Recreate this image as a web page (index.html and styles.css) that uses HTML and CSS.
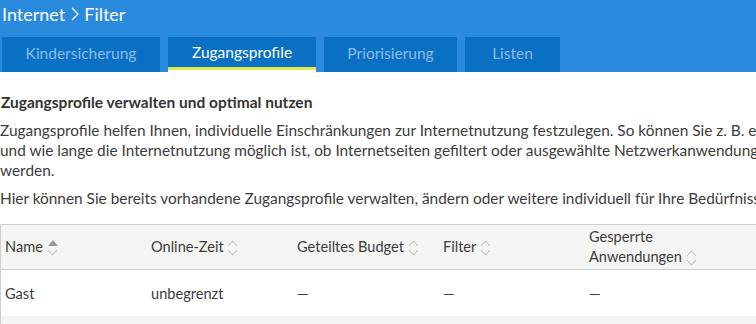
FILE: index.html
```html
<!DOCTYPE html>
<html lang="de">
<head>
  <title>Internet - Filter</title>
  <link rel="stylesheet" href="styles.css">
</head>
<body>

  <header class="topbar">
    <h1 class="crumbs">Internet
      <svg class="crumb-sep" width="8" height="14" viewBox="0 0 8 14"><path d="M1 1 L7 7 L1 13" fill="none" stroke="#fff" stroke-width="1.3"/></svg>
      Filter</h1>
    <nav class="tabs">
      <a class="tab tab-kinder">Kindersicherung</a>
      <a class="tab tab-profile active">Zugangsprofile</a>
      <a class="tab tab-prio">Priorisierung</a>
      <a class="tab tab-listen">Listen</a>
    </nav>
  </header>

  <main class="content">
    <h2 class="lead">Zugangsprofile verwalten und optimal nutzen</h2>
    <p class="text">Zugangsprofile helfen Ihnen, individuelle Einschränkungen zur Internetnutzung festzulegen. So können Sie z. B. einstellen, wann<br>
      und wie lange die Internetnutzung möglich ist, ob Internetseiten gefiltert oder ausgewählte Netzwerkanwendungen gesperrt<br>
      werden.</p>
    <p class="text">Hier können Sie bereits vorhandene Zugangsprofile verwalten, ändern oder weitere individuell für Ihre Bedürfnisse erstellen.</p>

    <table class="profiles">
      <thead>
        <tr>
          <th class="col-name">Name <span class="sort asc"></span></th>
          <th>Online-Zeit <span class="sort"></span></th>
          <th>Geteiltes Budget <span class="sort"></span></th>
          <th>Filter <span class="sort"></span></th>
          <th>Gesperrte<br>Anwendungen <span class="sort"></span></th>
          <th class="col-rest"></th>
        </tr>
      </thead>
      <tbody>
        <tr>
          <td>Gast</td>
          <td>unbegrenzt</td>
          <td>—</td>
          <td>—</td>
          <td>—</td>
          <td></td>
        </tr>
        <tr class="alt">
          <td>&nbsp;</td><td></td><td></td><td></td><td></td><td></td>
        </tr>
      </tbody>
    </table>
  </main>

</body>
</html>
```

FILE: styles.css
```css
html, body {
  overflow: hidden;
}

body {
  margin: 0;
  width: 1100px;
  font-family: Lato, "Liberation Sans", sans-serif;
  color: #3c3c3c;
  background: #fff;
}

.topbar {
  background-color: #2a8ade;
  padding: 0 0 0 2px;
}

.crumbs {
  margin: 0;
  height: 37px;
  display: flex;
  align-items: center;
  gap: 5px;
  font-size: 18px;
  font-weight: normal;
  color: #fff;
  padding-bottom: 10px;
  box-sizing: border-box;
}

.crumb-sep {
  margin-left: 1px;
}

.tabs {
  display: flex;
  align-items: flex-start;
  gap: 8px;
  height: 35px;
}

.tab {
  height: 35px;
  display: flex;
  align-items: center;
  justify-content: center;
  padding: 0 0 3px;
  background-color: #0a70c4;
  color: #8abbe8;
  font-size: 15.5px;
  box-sizing: border-box;
  cursor: pointer;
}

.tab-kinder { width: 158px; }
.tab-profile { width: 148px; }
.tab-prio { width: 133px; }
.tab-listen { width: 95px; }

.tab.active {
  height: 33px;
  padding-bottom: 1px;
  color: #fff;
  border-bottom: 3px solid #e2e84a;
  box-shadow: 0 2px 0 #fff;
}

.lead {
  margin: 21px 0 0 1px;
  font-size: 15.5px;
  font-weight: bold;
  color: #333;
}

.text {
  margin: 9px 0 0 0;
  font-size: 15.4px;
  line-height: 20px;
}

.text + .text {
  margin-top: 8px;
}

.profiles {
  margin-top: 16px;
  border-collapse: collapse;
  border-top: 1px solid #cfcfcf;
  border-left: 1px solid #cfcfcf;
  font-size: 14.6px;
}

.profiles th {
  background-color: #f4f4f2;
  font-weight: normal;
  text-align: left;
  height: 44px;
  padding: 0 0 0 4px;
  width: 142px;
  line-height: 20px;
  border-bottom: 1px solid #cfcfcf;
}

.profiles th.col-rest {
  width: 300px;
}

.profiles td {
  height: 46px;
  padding: 0 0 0 4px;
}

.profiles tr.alt td {
  background-color: #f4f4f2;
}

.sort {
  display: inline-block;
  width: 12px;
  height: 16px;
  vertical-align: -3px;
  position: relative;
}

.sort::before,
.sort::after {
  content: "";
  position: absolute;
  left: 2px;
  width: 6px;
  height: 6px;
  border-left: 1px solid #c4c4c4;
  border-top: 1px solid #c4c4c4;
}

.sort::before {
  top: 3px;
  transform: rotate(45deg);
}

.sort::after {
  top: 8px;
  transform: rotate(-135deg);
}

.sort.asc::before {
  border: 0;
  width: 0;
  height: 0;
  left: 1px;
  top: 1px;
  transform: none;
  border-left: 5px solid transparent;
  border-right: 5px solid transparent;
  border-bottom: 6px solid #9a9a9a;
}
```
